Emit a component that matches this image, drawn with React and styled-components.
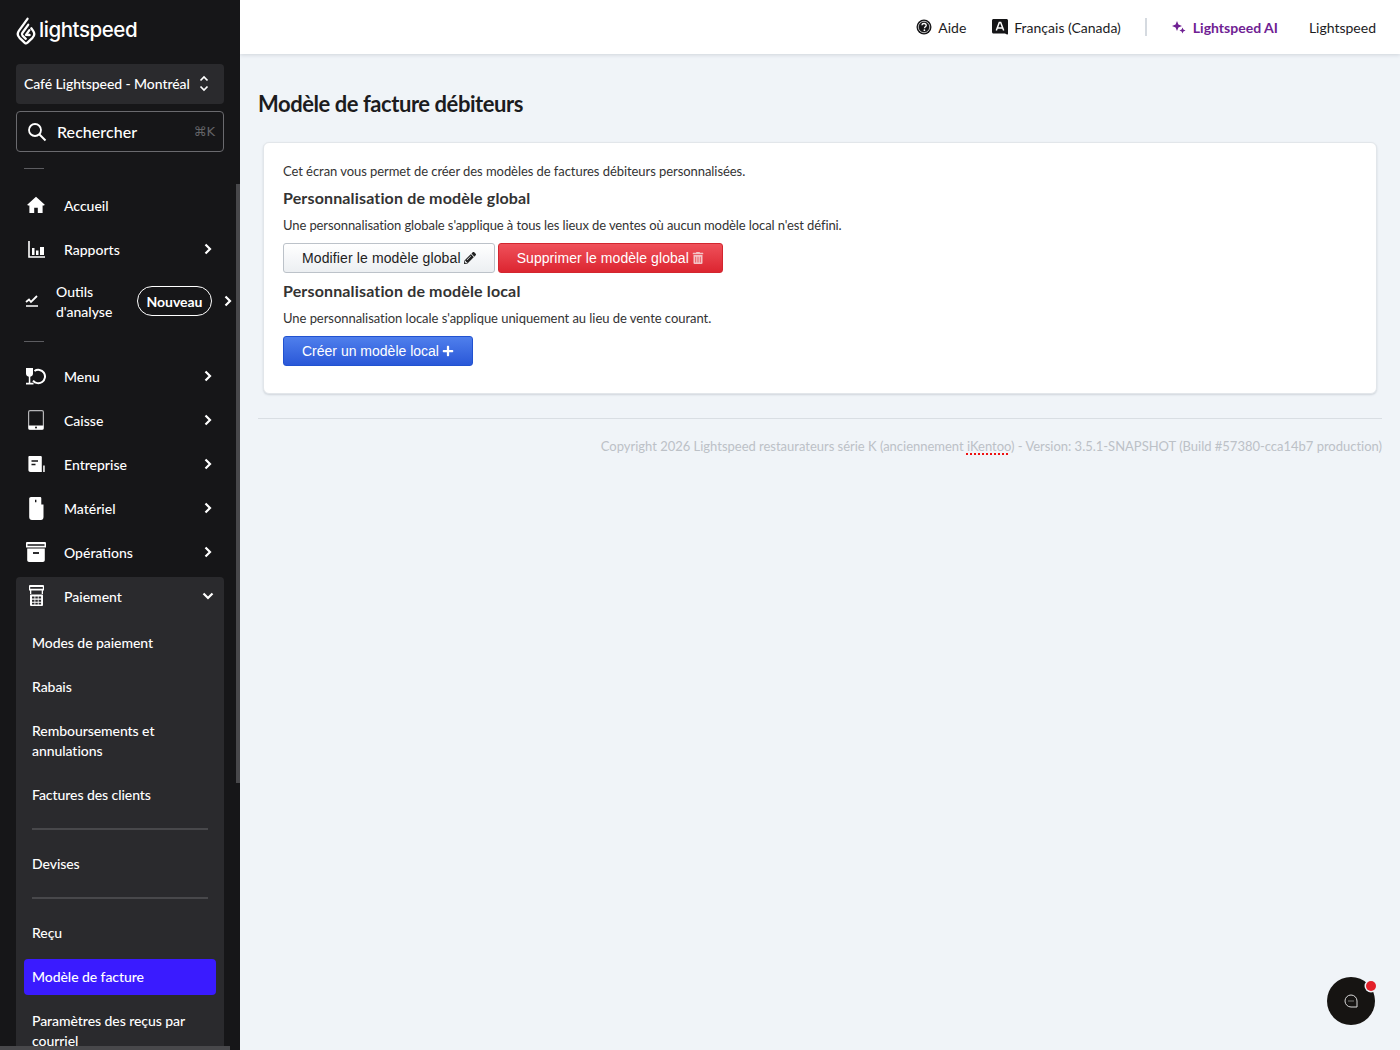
import React from "react";
import styled, { createGlobalStyle } from "styled-components";
import { FaPencilAlt, FaTrashAlt, FaPlus } from "react-icons/fa";

const Global = createGlobalStyle`
  html, body { margin: 0; padding: 0; height: 100%; overflow: hidden; }
  body { font-family: Lato, "Noto Sans", sans-serif; background: #f0f4f8; color: #1c1c1e; }
  * { box-sizing: border-box; }
`;

const Page = styled.div`
  display: flex;
  width: 1400px;
  height: 1050px;
  overflow: hidden;
  position: relative;
`;

const Sidebar = styled.aside`
  position: relative;
  flex: 0 0 240px;
  height: 1050px;
  background: #161618;
  color: #fff;
  overflow: hidden;
  padding: 16px 16px 0;
`;

const LogoRow = styled.div`
  display: flex;
  align-items: center;
  height: 30px;
  margin-bottom: 18px;
  gap: 3px;
`;

const Wordmark = styled.span`
  font-family: Inter, Lato, sans-serif;
  font-size: 20.5px;
  line-height: 30px;
  font-weight: 500;
  letter-spacing: -0.45px;
  color: #fff;
  position: relative;
  top: -1px;
`;

const Selector = styled.div`
  height: 40px;
  background: #2a2a2d;
  border-radius: 4px;
  display: flex;
  align-items: center;
  justify-content: space-between;
  padding: 0 15px 2px 8px;
  font-size: 14px;
  font-weight: 500;
  letter-spacing: -0.08px;
`;

const Search = styled.div`
  margin-top: 7px;
  height: 41px;
  border: 1px solid #6a6a6e;
  border-radius: 4px;
  display: flex;
  align-items: center;
  padding: 0 8px 0 10px;
  font-size: 16px;
  font-weight: 500;
  gap: 10px;
`;

const SearchLabel = styled.span`
  flex: 1;
  letter-spacing: 0.05px;
`;

const Kbd = styled.span`
  font-family: "DejaVu Sans", sans-serif;
  font-size: 13px;
  color: #636367;
`;

const Dash = styled.div`
  width: 20px;
  height: 1px;
  background: #5c5c60;
  margin: ${(p) => p.$margin};
`;

const Row = styled.div`
  height: ${(p) => p.$h || 44}px;
  display: flex;
  align-items: center;
  font-size: 14px;
  font-weight: 500;
  padding-left: 8px;
`;

const IconSlot = styled.span`
  flex: 0 0 24px;
  width: 24px;
  height: 24px;
  display: flex;
  align-items: center;
  justify-content: center;
  margin: 0 ${(p) => p.$mr ?? 16}px 2px 0;
`;

const Label = styled.span`
  flex: 1;
  line-height: 20px;
`;

const Chevron = styled.svg`
  width: ${(p) => p.$w || 10}px;
  height: 12px;
  margin: 0 ${(p) => p.$mr || 11}px 2px 0;
  flex: none;
`;

const AnalyticsRow = styled(Row)`
  width: 224px;
  padding-left: 4px;
`;

const AnalyticsLabel = styled.span`
  width: 81px;
  flex: none;
  line-height: 20px;
`;

const Badge = styled.span`
  flex: none;
  height: 30px;
  width: 75px;
  border: 1px solid #fff;
  border-radius: 15px;
  display: flex;
  align-items: center;
  justify-content: center;
  font-weight: 700;
  font-size: 14px;
  letter-spacing: -0.05px;
  margin: 0 11px 2px 0;
`;

const Group = styled.div`
  background: #2a2a2d;
  border-radius: 4px;
  margin-top: 2px;
`;

const SubItem = styled.div`
  margin: ${(p) => p.$m || "0"} 8px;
  padding: ${(p) => (p.$active ? 8 : 12)}px 8px;
  line-height: 20px;
  font-size: 14px;
  font-weight: 500;
  letter-spacing: -0.06px;
  border-radius: 4px;
  background: ${(p) => (p.$active ? "#3a1bff" : "transparent")};
`;

const GroupRule = styled.div`
  height: 2px;
  background: #48484b;
  margin: 11px 16px 12px;
`;

const VScroll = styled.div`
  position: absolute;
  right: 0;
  top: 184px;
  width: 4px;
  height: 599px;
  background: #48484b;
`;

const HScroll = styled.div`
  position: absolute;
  left: 0;
  top: 1046px;
  width: 230px;
  height: 4px;
  background: #48484b;
`;

const Main = styled.main`
  flex: 1;
  min-width: 0;
  display: flex;
  flex-direction: column;
`;

const TopBar = styled.header`
  height: 54px;
  flex: none;
  background: #fff;
  box-shadow: 0 1px 4px rgba(40, 50, 70, 0.16);
  display: flex;
  align-items: center;
  justify-content: flex-end;
  padding-right: 24px;
  font-size: 14px;
`;

const TopItem = styled.span`
  display: flex;
  align-items: center;
  gap: ${(p) => p.$gap || 6}px;
  margin-left: ${(p) => p.$ml}px;
  font-weight: ${(p) => (p.$accent ? 700 : 400)};
  color: ${(p) => (p.$accent ? "#6f2193" : "#1c1c1e")};
`;

const TopDivider = styled.span`
  width: 2px;
  height: 18px;
  background: #d5dae0;
  margin-left: 24px;
`;

const Content = styled.div`
  padding: 36px 18px 0;
`;

const Title = styled.h1`
  margin: 0;
  font-size: 22px;
  line-height: 28px;
  font-weight: 700;
  letter-spacing: -0.45px;
  color: #1c1c1e;
`;

const Card = styled.section`
  margin: 24px 5px 0;
  height: 252px;
  background: #fff;
  border: 1px solid #e2e6ea;
  border-radius: 6px;
  box-shadow: 0 1px 2px rgba(60, 70, 90, 0.18);
  padding: 18px 19px;
  color: #333;
`;

const Para = styled.p`
  margin: 0;
  font-size: 13px;
  line-height: 20px;
  letter-spacing: ${(p) => p.$ls}px;
  color: #333;
`;

const Heading = styled.h4`
  margin: 7px 0 7px;
  font-size: 16px;
  line-height: 20px;
  font-weight: 700;
  letter-spacing: 0.15px;
  color: #333;
`;

const Buttons = styled.div`
  display: flex;
  gap: 3px;
  margin: 8px 0;
`;

const Btn = styled.button`
  height: 30px;
  padding: 0 18px;
  border-radius: 3px;
  font-family: "Liberation Sans", Arial, sans-serif;
  font-size: 14px;
  letter-spacing: ${(p) => p.$ls || 0}px;
  display: inline-flex;
  align-items: center;
  gap: 3px;
  border: 1px solid ${(p) => p.$border};
  color: ${(p) => p.$color};
  background: linear-gradient(${(p) => p.$from}, ${(p) => p.$to});
`;

const Rule = styled.hr`
  margin: 24px 0 0;
  border: 0;
  border-top: 1px solid #d9dee3;
`;

const Footer = styled.div`
  margin-top: 17px;
  text-align: right;
  font-size: 13px;
  line-height: 20px;
  letter-spacing: -0.015px;
  color: #bcc1c7;
  white-space: nowrap;
`;

const Misspelled = styled.span`
  text-decoration: underline dotted #ee1111;
  text-decoration-thickness: 1.5px;
  text-underline-offset: 2px;
`;

const Chat = styled.div`
  position: absolute;
  right: 25px;
  bottom: 25px;
  width: 48px;
  height: 48px;
  border-radius: 50%;
  background: #161412;
  display: flex;
  align-items: center;
  justify-content: center;
`;

const ChatDot = styled.span`
  position: absolute;
  top: 4px;
  right: -1px;
  width: 10px;
  height: 10px;
  border-radius: 50%;
  background: #e3202a;
  box-shadow: 0 0 0 1.5px #f0f4f8;
`;

const Right = () => (
  <Chevron viewBox="0 0 10 12"><path d="M2.5 1.5 7 6l-4.5 4.5" fill="none" stroke="#fff" strokeWidth="2.2" /></Chevron>
);
const Down = () => (
  <Chevron $w={12} $mr={10} viewBox="0 0 12 10"><path d="M1.5 2.5 6 7l4.5-4.5" fill="none" stroke="#fff" strokeWidth="2.2" /></Chevron>
);

const Logo = () => (
  <svg width="20" height="28" viewBox="0 0 20 28" fill="none" stroke="#fff" strokeWidth="2.3" strokeLinejoin="round" strokeLinecap="round">
    <path d="M11.5 1.800 3 13.600c-1.800 2.500-1.500 5.200.5 7.200l5.300 5c.8.700 1.700.7 2.400 0l5.300-5c2-2 2.300-4.700.5-7.200l-1.700-2.300" />
    <path d="M12.200 7.800 6.300 16c-.7 1-.6 1.900.2 2.700l3.300 3.100" />
    <path d="M13.400 13.200 10 17.900l3.400 0.100 .2-.1" />
  </svg>
);
const Updown = () => (
  <svg width="10" height="17" viewBox="0 0 10 17"><path d="M1.500 5.500 5 2l3.500 3.500M1.500 11.500 5 15l3.500-3.500" fill="none" stroke="#fff" strokeWidth="1.700" /></svg>
);
const SearchIcon = () => (
  <svg width="20" height="20" viewBox="0 0 20 20"><circle cx="8" cy="8" r="6" fill="none" stroke="#fff" strokeWidth="1.800" /><path d="m12.500 12.500 6 6" stroke="#fff" strokeWidth="2" /></svg>
);
const Home = () => (
  <svg width="20" height="18" viewBox="0 0 20 18"><path d="M10 .8 1.200 8.700 2 9.600h1.400V17h4.800v-5.200h3.600V17h4.800V9.600H18l.8-.9z" fill="#fff" /></svg>
);
const Reports = () => (
  <svg width="18" height="18" viewBox="0 0 18 18" style={{ marginLeft: 2 }}><path d="M1 1v16h16" fill="none" stroke="#fff" strokeWidth="1.600" /><path d="M4 8h2.500v7H4zM8 10.500h2.500V15H8zM12 7h4v8h-4z" fill="#fff" /></svg>
);
const Analytics = () => (
  <svg width="14" height="14" viewBox="0 0 14 14"><path d="m1 8 3-2.500 2 2.500L12 2" fill="none" stroke="#fff" strokeWidth="1.800" /><path d="M1 12h12" stroke="#fff" strokeWidth="1.500" /></svg>
);
const MenuIcon = () => (
  <svg width="20" height="17" viewBox="0 0 20 17">
    <path d="M0 0h7v5.500c0 1.700-1.200 3-2.700 3.200V14.800h3.200V16.500H0V14.800h2.800V8.700C1.200 8.500 0 7.200 0 5.500z" fill="#fff" />
    <circle cx="12.300" cy="8.500" r="6.700" fill="none" stroke="#fff" strokeWidth="2" strokeDasharray="31 11" transform="rotate(-125 12.300 8.500)" />
  </svg>
);
const Tablet = () => (
  <svg width="16" height="20" viewBox="0 0 16 20"><rect x=".6" y=".6" width="14.800" height="18.800" rx="1.500" fill="none" stroke="#b4b4b6" strokeWidth="1.200" /><path d="M.6 15.500h14.800v2.900a1 1 0 0 1-1 1H1.600a1 1 0 0 1-1-1z" fill="#fff" /><circle cx="8" cy="17.500" r="1" fill="#161618" /></svg>
);
const Biz = () => (
  <svg width="17" height="16" viewBox="0 0 17 16"><path d="M1.500 0h11c.8 0 1.300.5 1.300 1.300V16H2.500C1.200 16 .4 15 .4 14V1C.4.400.9 0 1.500 0z" fill="#fff" /><path d="M3.500 5h6.500M3.500 8.500h4" stroke="#161618" strokeWidth="1.400" /><path d="M15.200 9.500h1.500V16h-1.500z" fill="#fff" /></svg>
);
const Hardware = () => (
  <svg width="15" height="23" viewBox="0 0 15 23"><path d="M2 0h9c.8 0 1.300.5 1.300 1.300V7.500H14.500V20c0 1.700-1 3-2.500 3H3c-1.700 0-2.800-1.300-2.800-3V1.800C.2.700 1 0 2 0z" fill="#fff" /><path d="M6 2.800h1.400v2.400H6z" fill="#161618" /></svg>
);
const Archive = () => (
  <svg width="20" height="20" viewBox="0 0 20 20"><path d="M0 1.200C0 .5.500 0 1.200 0h17.600c.7 0 1.200.5 1.200 1.200V5.500H0zM1.500 2.200v1.500h17V2.200z" fill="#fff" fillRule="evenodd" /><path d="M1.200 6.500h17.600V18c0 1.100-.8 2-1.900 2H3.100c-1.100 0-1.900-.9-1.900-2z" fill="#fff" /><path d="M7 11h6" stroke="#161618" strokeWidth="1.800" /></svg>
);
const Calc = () => (
  <svg width="15" height="21" viewBox="0 0 15 21"><path d="M1 0h13a1 1 0 0 1 1 1v4.500h-1V9H1V5.500H0V1a1 1 0 0 1 1-1zM1.200 2v1.800h12.600V2zM2.300 5.500V9h10.400V5.500z" fill="#fff" fillRule="evenodd" /><path d="M2 9.500h11c.8 0 1 .5 1 1V20a1 1 0 0 1-1 1H2a1 1 0 0 1-1-1v-9.500c0-.5.300-1 1-1z" fill="#fff" /><path d="M3 11.500h2.500v2H3zM6.300 11.500h2.500v2H6.300zM9.600 11.500h2.500v2H9.600zM3 14.700h2.500v2H3zM6.300 14.700h2.500v2H6.300zM9.600 14.700h2.500v2H9.600zM3 17.800h2.500v1.600H3zM6.300 17.800h2.500v1.600H6.300zM9.600 17.800h2.500v1.600H9.600z" fill="#2a2a2d" /></svg>
);
const Help = () => (
  <svg width="16" height="16" viewBox="0 0 16 16"><circle cx="8" cy="8" r="7.500" fill="#161618" /><circle cx="8" cy="8" r="5.700" fill="none" stroke="#fff" strokeWidth=".7" /><path d="M5.900 6.300C6 5 7 4.500 8 4.500c1.200 0 2.200.7 2.200 1.900 0 1.500-1.700 1.400-1.700 2.800" fill="none" stroke="#fff" strokeWidth="1.300" /><circle cx="8.400" cy="11.200" r=".9" fill="#fff" /></svg>
);
const Lang = () => (
  <svg width="16" height="16" viewBox="0 0 16 16"><path d="M1.500 0h13c.8 0 1.500.7 1.500 1.500v13c0 .8-.5 1.300-1 1l-2-1H1.500C.7 14.500 0 13.800 0 13V1.500C0 .7.700 0 1.500 0z" fill="#161618" /><path d="m4.300 11.500 3-8h1.400l3 8m-6.300-2.500h5.200" fill="none" stroke="#fff" strokeWidth="1.500" /></svg>
);
const Sparkle = () => (
  <svg width="14" height="14" viewBox="0 0 14 14" fill="#6f2193"><path d="M5 1 6.400 4.600 10 6 6.400 7.400 5 11 3.600 7.400 0 6l3.600-1.400z" /><path d="M10.500 7.500 11.400 9.600 13.500 10.500 11.400 11.400 10.500 13.500 9.600 11.400 7.500 10.500 9.600 9.600z" /></svg>
);
const ChatIcon = () => (
  <svg width="14" height="14" viewBox="0 0 14 14"><path d="M7 1a6 6 0 1 0 0 12h6V7a6 6 0 0 0-6-6z" fill="none" stroke="#d8d8d8" strokeWidth="1" /><path d="M4.500 7h5" stroke="#d8d8d8" strokeWidth="1.200" strokeDasharray="1 1" /></svg>
);

const navTop = [
  ["Menu", <MenuIcon key="m" />],
  ["Caisse", <Tablet key="c" />],
  ["Entreprise", <Biz key="e" />],
  ["Matériel", <Hardware key="h" />],
  ["Opérations", <Archive key="o" />],
];

export default function App() {
  return (
    <Page>
      <Global />
      <Sidebar>
        <LogoRow><Logo /><Wordmark>lightspeed</Wordmark></LogoRow>
        <Selector>Café Lightspeed - Montréal<Updown /></Selector>
        <Search><SearchIcon /><SearchLabel>Rechercher</SearchLabel><Kbd>⌘K</Kbd></Search>
        <Dash $margin="16px 0 15px 8px" />
        <Row><IconSlot><Home /></IconSlot><Label>Accueil</Label></Row>
        <Row><IconSlot><Reports /></IconSlot><Label>Rapports</Label><Right /></Row>
        <AnalyticsRow $h={60}>
          <IconSlot $mr={12}><Analytics /></IconSlot>
          <AnalyticsLabel>Outils d'analyse</AnalyticsLabel>
          <Badge>Nouveau</Badge>
          <Right />
        </AnalyticsRow>
        <Dash $margin="9px 0 13px 8px" />
        {navTop.map(([t, i]) => (
          <Row key={t}><IconSlot>{i}</IconSlot><Label>{t}</Label><Right /></Row>
        ))}
        <Group>
          <Row $h={39}><IconSlot><Calc /></IconSlot><Label>Paiement</Label><Down /></Row>
          <SubItem $m="5px 8px 0">Modes de paiement</SubItem>
          <SubItem>Rabais</SubItem>
          <SubItem>Remboursements et annulations</SubItem>
          <SubItem>Factures des clients</SubItem>
          <GroupRule />
          <SubItem>Devises</SubItem>
          <GroupRule />
          <SubItem>Reçu</SubItem>
          <SubItem $active $m="4px">Modèle de facture</SubItem>
          <SubItem>Paramètres des reçus par courriel</SubItem>
        </Group>
        <VScroll />
        <HScroll />
      </Sidebar>
      <Main>
        <TopBar>
          <TopItem $ml={0}><Help />Aide</TopItem>
          <TopItem $ml={26}><Lang />Français (Canada)</TopItem>
          <TopDivider />
          <TopItem $ml={25} $accent $gap={7}><Sparkle />Lightspeed AI</TopItem>
          <TopItem $ml={31}>Lightspeed</TopItem>
        </TopBar>
        <Content>
          <Title>Modèle de facture débiteurs</Title>
          <Card>
            <Para $ls={-0.06}>Cet écran vous permet de créer des modèles de factures débiteurs personnalisées.</Para>
            <Heading>Personnalisation de modèle global</Heading>
            <Para $ls={-0.1}>Une personnalisation globale s'applique à tous les lieux de ventes où aucun modèle local n'est défini.</Para>
            <Buttons>
              <Btn $ls={0.12} $border="#bcc2c9" $color="#222" $from="#ffffff" $to="#eceff2">Modifier le modèle global <FaPencilAlt size={12} /></Btn>
              <Btn $ls={0.07} $border="#d3262f" $color="#fff" $from="#ef515a" $to="#dc2530">Supprimer le modèle global <FaTrashAlt size={12} color="#f3c4c6" /></Btn>
            </Buttons>
            <Heading>Personnalisation de modèle local</Heading>
            <Para $ls={-0.045}>Une personnalisation locale s'applique uniquement au lieu de vente courant.</Para>
            <Buttons>
              <Btn $border="#2152d0" $color="#fff" $from="#4f7fec" $to="#2a58d8">Créer un modèle local <FaPlus size={12} /></Btn>
            </Buttons>
          </Card>
          <Rule />
          <Footer>Copyright 2026 Lightspeed restaurateurs série K (anciennement <Misspelled>iKentoo</Misspelled>) - Version: 3.5.1-SNAPSHOT (Build #57380-cca14b7 production)</Footer>
        </Content>
      </Main>
      <Chat><ChatIcon /><ChatDot /></Chat>
    </Page>
  );
}
